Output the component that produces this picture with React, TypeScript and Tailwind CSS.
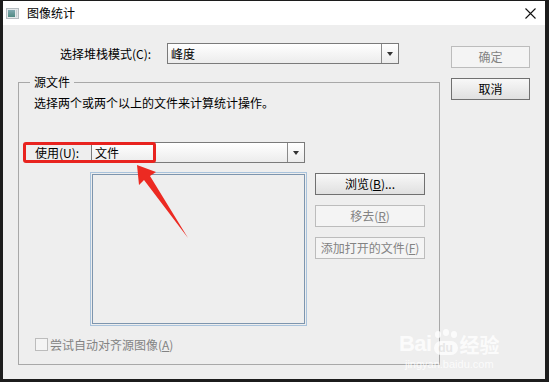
import React from "react";

const font = { fontFamily: '"Noto Sans CJK SC", "Noto Sans", sans-serif' };

function Combo({ value, width }: { value: string; width: string }) {
  return (
    <div
      className={`${width} h-[21px] flex border border-[#7a7a7a] bg-gradient-to-b from-[#ffffff] to-[#ececec]`}
    >
      <div className="flex-1 flex items-center pl-[3px] text-[12px] text-black leading-none">{value}</div>
      <div className="w-[17px] border-l border-[#8a8a8a] flex items-center justify-center">
        <div className="w-0 h-0 border-l-[3.5px] border-r-[3.5px] border-t-[4px] border-l-transparent border-r-transparent border-t-[#333]" />
      </div>
    </div>
  );
}

function Btn({ label, disabled, w = "w-[79px]" }: { label: React.ReactNode; disabled?: boolean; w?: string }) {
  return (
    <div
      className={`${w} h-[22px] shrink-0 flex items-center justify-center text-[12px] leading-none ${
        disabled
          ? "border border-[#bcbcbc] bg-[#f4f4f4] text-[#838383]"
          : "border border-[#707070] bg-gradient-to-b from-[#f8f8f8] to-[#e0e0e0] text-black"
      }`}
    >
      {label}
    </div>
  );
}

export default function App() {
  return (
    <div className="w-[549px] h-[382px] bg-[#1c1c1c] pt-[1px] pl-[3px] pr-[4px] pb-[3px]" style={font}>
      <div className="w-full h-full flex flex-col">
        {/* Title bar */}
        <div className="h-[24px] bg-white flex items-center">
          <div className="ml-[3px] w-[13px] h-[11px] border border-[#b5bcc0] bg-[#e4e8ea] flex p-[1px] gap-[1px]">
            <div className="w-[7px] h-full bg-gradient-to-b from-[#7fa9b0] to-[#4f8a82]" />
            <div className="flex-1 h-full bg-[#c9d0d2]" />
          </div>
          <div className="ml-[8px] text-[12px] text-black leading-none">图像统计</div>
          <div className="flex-1" />
          <svg width="11" height="11" viewBox="0 0 11 11" className="mr-[9px]">
            <path d="M0.5 0.5 L10.5 10.5 M10.5 0.5 L0.5 10.5" stroke="#111" strokeWidth="1.1" />
          </svg>
        </div>

        {/* Body */}
        <div className="flex-1 bg-[#eeeeee] relative flex">
          {/* Left column */}
          <div className="w-[440px] shrink-0 flex flex-col">
            <div className="mt-[18px] flex items-center">
              <div className="ml-[57px] w-[104px] text-[12px] text-black leading-none">选择堆栈模式(C):</div>
              <div className="ml-[3px]">
                <Combo value="峰度" width="w-[232px]" />
              </div>
            </div>

            {/* Group box */}
            <div className="ml-[15px] mt-[18px] w-[422px] h-[283px] border border-[#a8a8a8] relative flex flex-col">
              <div className="absolute -top-[8px] left-[11px] px-[4px] bg-[#eeeeee] text-[12px] leading-[14px] text-black">
                源文件
              </div>
              <div className="ml-[15px] mt-[13px] text-[12px] leading-[14px] text-black">
                选择两个或两个以上的文件来计算统计操作。
              </div>
              <div className="mt-[32px] flex items-center">
                <div className="ml-[16px] w-[56px] text-[12px] leading-none text-black">使用(U):</div>
                <Combo value="文件" width="w-[214px]" />
              </div>
              <div className="mt-[9px] flex">
                <div className="ml-[71px] w-[217px] h-[154px] shrink-0 border border-[#a9c3dc] p-[1px]">
                  <div className="w-full h-full border border-[#7d95ae] bg-[#eeeeee]" />
                </div>
                <div className="ml-[8px] mt-[1px] flex flex-col gap-[10px]">
                  <Btn w="w-[110px]" label={<span>浏览(<span className="underline">B</span>)...</span>} />
                  <Btn w="w-[110px]" disabled label={<span>移去(<span className="underline">R</span>)</span>} />
                  <Btn w="w-[110px]" disabled label={<span>添加打开的文件(<span className="underline">F</span>)</span>} />
                </div>
              </div>
              <div className="mt-[12px] ml-[16px] flex items-center">
                <div className="w-[13px] h-[13px] border border-[#bcbcbc] bg-[#f4f4f4]" />
                <div className="ml-[2px] text-[12px] leading-none text-[#838383]">
                  尝试自动对齐源图像(<span className="underline">A</span>)
                </div>
              </div>
            </div>
          </div>

          {/* Right column */}
          <div className="ml-[8px] mt-[21px] flex flex-col gap-[10px]">
            <Btn disabled label="确定" />
            <Btn label="取消" />
          </div>

          {/* Red highlight */}
          <div className="absolute left-[20px] top-[117px] w-[133px] h-[21px] border-[3px] border-[#e8231f] rounded-[3px]" />

          {/* Red arrow */}
          <svg className="absolute left-0 top-0 pointer-events-none" width="542" height="353" viewBox="0 0 542 353">
            <polygon points="134,140 153,147 147,151 185,213 141,155 136,160" fill="#ec2a22" />
          </svg>

          {/* Watermark */}
          <div className="absolute left-[396px] top-[306px] flex flex-col items-center text-white opacity-80">
            <div className="flex items-end leading-none">
              <span className="text-[22px] font-bold tracking-tight" style={{ fontFamily: '"Liberation Sans", sans-serif' }}>
                Bai
              </span>
              <span className="relative mx-[1px] w-[26px] h-[24px] flex items-end justify-center">
                <span className="absolute top-0 left-[2px] w-[6px] h-[7px] rounded-full bg-white" />
                <span className="absolute top-[-2px] left-[10px] w-[6px] h-[7px] rounded-full bg-white" />
                <span className="absolute top-0 left-[18px] w-[6px] h-[7px] rounded-full bg-white" />
                <span
                  className="relative w-[24px] h-[14px] rounded-[7px] bg-white text-[#e6e6e6] text-[12px] font-bold flex items-center justify-center"
                  style={{ fontFamily: '"Liberation Sans", sans-serif' }}
                >
                  du
                </span>
              </span>
              <span className="text-[20px] font-bold leading-none">经验</span>
            </div>
            <div className="text-[11px] leading-none mt-[4px]" style={{ fontFamily: '"Liberation Sans", sans-serif' }}>
              jingyan.baidu.com
            </div>
          </div>
        </div>
      </div>
    </div>
  );
}
